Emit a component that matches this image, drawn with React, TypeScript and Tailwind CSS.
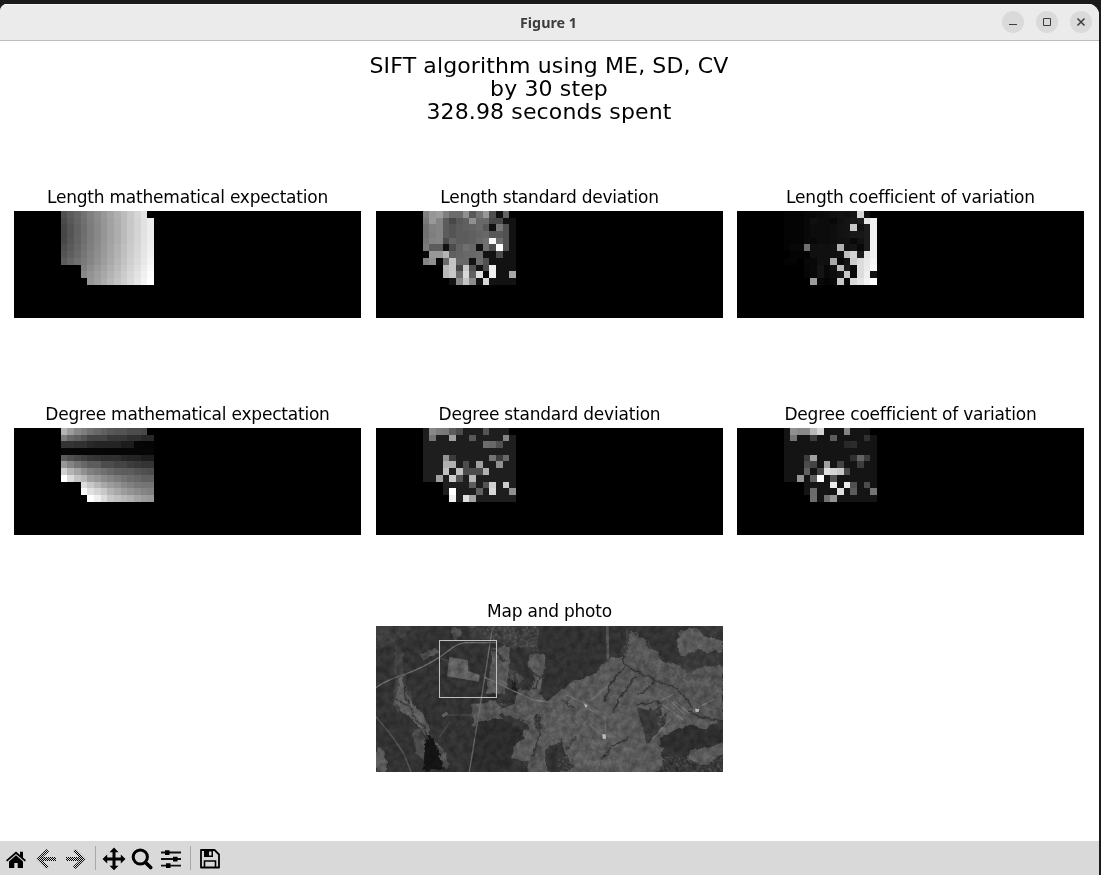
import React from "react";

const COLS = 52;
const ROWS = 16;
const FIRST_COL = 7;

const lengthMean = `
50 5c 66 72 80 8b 98 a4 b0 bc c9 d6 e4 00
4a 58 64 70 7e 8a 96 a2 ae bb c8 d4 e2 ec
46 54 62 6e 7c 88 95 a1 ad bb c8 d4 e2 ec
46 54 62 6e 7c 88 95 a1 ad bb c8 d4 e2 ec
48 56 63 70 7d 89 96 a2 ae bb c9 d5 e3 ed
4e 5a 66 73 7f 8b 98 a4 b1 be cb d7 e4 ee
54 5e 69 76 82 8e 9a a6 b2 c0 cd d9 e6 f0
5c 66 6f 7a 85 91 9d a9 b6 c3 cf db e8 f4
00 00 00 7f 8c 98 a2 ae ba c7 d3 df ec f8
00 00 00 88 93 9d a7 b3 bf cb d7 e3 f0 fc
00 00 00 00 96 a0 ab b7 c3 ce da e6 f4 ff`;

const lengthDeviation = `
80 96 9c 80 6c 6c 90 58 74 98 50 12 64 00
78 98 84 5c 48 58 60 90 68 68 48 48 12 12
70 80 84 5c 54 5c 60 62 68 58 10 78 50 12
70 7e 84 5c 54 5c 5c 60 64 68 58 58 50 12
74 82 84 4c 64 5c 5c 60 68 70 f8 6c 50 12
7a 5c 5c 12 4c 62 70 68 12 70 4c ff 50 12
08 98 98 b4 60 64 68 68 6c 12 12 4c 12 12
84 90 08 6a c4 68 68 12 6c 50 12 12 12 12
00 00 00 b8 c4 44 c8 50 12 4c f0 12 12 12
00 00 00 b8 c8 6c d8 60 e0 08 f0 12 12 a8
00 00 00 00 12 88 c4 8c 12 d8 12 12 12 12`;

const lengthVariation = `
04 04 04 08 08 0a 0c 10 12 10 14 d8 12 00
04 04 04 08 10 0c 0c 08 10 14 18 1c e4 f0
04 04 04 08 0c 0c 0c 0e 12 14 c8 10 1c f0
04 04 04 08 0c 0c 0c 0e 12 14 18 18 1c f0
04 04 04 0a 08 0c 0c 0e 10 12 08 12 1c f0
04 08 08 70 10 10 10 12 b0 12 14 08 1c f0
00 04 04 04 10 10 10 10 10 c0 d4 1c e4 f0
04 04 00 08 08 10 10 a8 08 14 cc dc e8 f4
00 00 00 06 08 14 08 10 bc 18 08 dc ea f8
00 00 00 06 08 14 08 0c 14 c8 08 dc ee 12
00 00 00 00 9c 08 04 08 c8 08 d8 e4 f4 ff`;

const degreeMean = `
b4 9c 88 7c 70 68 60 58 54 54 4c 4c 48 00
7c 68 60 54 44 44 44 38 38 38 30 30 28 28
34 34 30 30 28 24 24 24 24 1c 1c 06 05 05
06 06 06 06 06 06 06 06 06 06 06 06 06 06
5c 50 48 40 38 34 30 30 30 28 24 24 1c 1c
98 84 74 68 5c 5c 4c 4c 44 44 3c 38 34 34
d0 b4 a4 90 80 78 70 68 60 5c 5c 54 50 4c
ff dc c4 b8 a0 98 8c 84 7c 74 6c 68 60 60
00 00 00 dc c8 b8 a8 9c 94 88 80 78 74 74
00 00 00 f8 e0 d4 c8 b4 a8 9c 94 8c 84 80
00 00 00 00 ff f0 dc c8 c0 b8 b0 a4 9c 98`;

const degreeDeviation = `
1e 88 7c 78 5c 4c 1e 1e 1e 54 1e 1e 1e 00
1e 74 1e 1e a0 1e 1e 58 1e 1e 1e 1e 84 1e
1e 1e 1e 1e 1e 1e 1e 1e 1e 6c 68 50 1e 1e
1e 1e 1e 1e 1e 1e 1e 1e 1e 1e 1e 1e 1e 1e
1e 1e 1e 94 3c 1e 1e 1e 1e 1e 74 3c 68 1e
1e 1e 1e b0 b0 1e 4c 1e a0 1e 1e 90 1e 1e
1e 1e 1e c0 1e c0 4c 4c 4c b0 1e 1e 1e 1e
1e 1e a0 1e cc 54 1e b8 1e 1e 1e 1e 1e 1e
00 00 00 1e 1e 1e 1e 5c 1e 54 d0 1e cc 1e
00 00 00 1e ff 1e 1e 1e 60 1e d8 1e 1e 90
00 00 00 00 f0 1e e0 a4 1e 1e 1e 1e 1e 1e`;

const degreeVariation = `
14 90 88 88 b8 d4 14 14 14 84 14 14 14 00
14 74 14 14 3c 14 14 5c 14 14 14 14 30 14
14 14 14 14 14 14 14 14 14 28 2c 14 14 14
14 14 14 14 14 14 14 14 14 14 14 14 14 14
14 14 14 3c a0 14 14 14 14 14 30 64 3c 14
14 14 14 4c 44 14 a0 14 44 14 14 3c 14 14
14 14 14 60 14 44 e0 d4 c8 48 14 14 14 14
14 14 94 14 60 ff 14 50 14 14 14 14 14 14
00 00 00 14 14 14 14 ec 14 ec 50 14 4c 14
00 00 00 14 6c 14 14 14 e0 14 5c 14 14 74
00 00 00 00 6c 14 70 94 14 14 14 14 14 14`;

function Heatmap({ data }: { data: string }) {
  const rows = data.trim().split("\n").map((line) => line.split(" "));
  return (
    <svg
      className="block h-[107px] w-[347px] bg-black"
      viewBox={`0 0 ${COLS} ${ROWS}`}
      preserveAspectRatio="none"
      shapeRendering="crispEdges"
    >
      {rows.map((row, y) =>
        row.map((v, x) =>
          v === "00" ? null : (
            <rect key={`${x}-${y}`} x={FIRST_COL + x} y={y} width="1" height="1" fill={`#${v}${v}${v}`} />
          ),
        ),
      )}
    </svg>
  );
}

function Plot({ title, data }: { title: string; data: string }) {
  return (
    <figure className="w-[347px]">
      <figcaption className="h-6 whitespace-nowrap text-center text-[17px] leading-5 tracking-[-0.21px]">
        {title}
      </figcaption>
      <Heatmap data={data} />
    </figure>
  );
}

function TerrainMap() {
  return (
    <svg className="block h-[146px] w-[347px] bg-[#303030]" viewBox="18 18 1041 438" preserveAspectRatio="none">
      <defs>
        <filter id="rough" x="0" y="0" width="100%" height="100%" colorInterpolationFilters="sRGB">
          <feTurbulence type="fractalNoise" baseFrequency="0.045" numOctaves="4" seed="4" result="n" />
          <feDisplacementMap in="SourceGraphic" in2="n" scale="18" xChannelSelector="R" yChannelSelector="G" />
          <feGaussianBlur stdDeviation="0.8" />
        </filter>
        <filter id="grain" x="0" y="0" width="100%" height="100%" colorInterpolationFilters="sRGB">
          <feTurbulence type="fractalNoise" baseFrequency="0.05" numOctaves="5" seed="9" />
          <feColorMatrix values="1.8 0 0 0 -0.3  1.8 0 0 0 -0.3  1.8 0 0 0 -0.3  0 0 0 0 1" />
        </filter>
        <filter id="speckle" x="0" y="0" width="100%" height="100%" colorInterpolationFilters="sRGB">
          <feTurbulence type="fractalNoise" baseFrequency="0.12" numOctaves="3" seed="21" result="s" />
          <feColorMatrix in="s" values="0 0 0 0 .42  0 0 0 0 .42  0 0 0 0 .42  4 0 0 0 -1.8" result="dots" />
          <feComposite in="dots" in2="SourceGraphic" operator="in" />
        </filter>
      </defs>
      <rect x="0" y="0" width="1080" height="480" fill="#303030" />
      <g filter="url(#rough)">
        <rect x="0" y="0" width="1080" height="480" fill="none" />
        {/* brighter ground in the north-west and the suburb strip */}
        <path d="M18 18H135L90 55 18 95z" fill="#3b3b3b" />
        <path d="M243 25h25l4 25-22 10z" fill="#4e4e4e" />
        <path d="M290 18H505V95L430 85 385 62 300 55z" fill="#383838" />
        <path d="M150 105l45-25 10 18-45 22z" fill="#4d4d4d" />
        <path d="M75 80h22l8 90 20 75-45 30-12-20z" fill="#3e3e3e" />
        {/* river valley */}
        <path d="M82 175l22-5 6 55 22 30 20 15 18 35 12 40-14 6-25-35-35-35-35-30 5-25 12-20z" fill="#585858" />
        <path d="M130 335l30-12 5 70-5 25-25-15z" fill="#494949" />
        <path d="M190 360l20 15 22 35-2 35-15-8z" fill="#4c4c4c" />
        <path d="M18 380l25 15 8 30-4 30H18z" fill="#595959" />
        {/* fields */}
        <path d="M368 83l52-2-6 90-10 52-54-2z" fill="#545454" />
        <path d="M474 98l56 8-22 122-25-12 12-55-22-20z" fill="#545454" />
        <path d="M415 145l30 10 15 25-20 15-20-20z" fill="#474747" />
        {/* central town */}
        <path d="M306 255l70-15 12 28 45-15 10-50 65 20 40 35 55-70 60-10 40-50 60-20 20-60 80 50 30 50 60 20 60 20 30 50v70l-40 20-45-10-50-5-20 50-25 60-5 40H520l-35 20-15-60-40-8 5-60-55-15-70-22z" fill="#515151" />
        <path d="M535 240l75-55 60-20 50-48 50-10 80 30 50 60 90 60 20 50-60 20-70 60-10 70H560l-30-50z" fill="#555" />
        <path d="M928 32l55-10 22 30 54 5v38l-70 5-50 22-15-45z" fill="#565656" />
        <path d="M780 30l50 35 20 60 90 10 60-25 59 30v160l-90-10-100-80-110-50z" fill="#505050" />
        <path d="M960 378l60 5 39-20v40l-45 30-60-10z" fill="#555" />
        <path d="M430 335l50 5 20 50-30 35-40-30z" fill="#555" />
        {/* woods and clearings over the town */}
        <path d="M525 50l235-30v80l-55 20-50 50-40 10-60 30-30-5z" fill="#2f2f2f" />
        <path d="M970 18h89v30l-60-5z" fill="#363636" />
        <path d="M920 115l65-25 74 10v35l-60 5-50 20z" fill="#363636" />
        <path d="M870 350l80-35 109 20v30l-60 20-80 10-50-15z" fill="#2c2c2c" />
        <path d="M800 265l35 5 40-15 5 20-25 25 40-25-15 40-50 60-10-45z" fill="#353535" />
        <path d="M375 295l70 10 20 50-35 25-5 70-125 2 20-145z" fill="#2a2a2a" />
        <path d="M525 390l50-35 15 55 20 35-60 15-25-20z" fill="#303030" />
        <path d="M385 280l30 5 50 20 15 28-30-5-50-30z" fill="#323232" />
        <path d="M495 280l18 5-5 55-12-25z" fill="#323232" />
        <path d="M425 175l14 15 5 25-12 15-6-20z" fill="#202020" />
        <path d="M170 335l20 18 18 45 14 50-62 5 6-85z" fill="#131313" />
        <g fill="none" stroke="#343434" strokeWidth="5">
          <path d="M82 240l40 20 12 35 25 20 15 45M102 175l3 50 12 30M150 330l18 25" />
          <path d="M745 18l20 115 30 20 60 25 60 25 40 40 15 35M765 140l-45 55-15 50M800 170l-40 45-30 60M855 185l-50 45M800 255l70-10" />
          <path d="M438 155l2 70M370 90l40 35M480 150l45 25M488 210l35-55M490 410l25-100M690 430l35-50 50-30M950 270l50 25 50 8" />
          <path d="M575 235l35 30M620 350l-30 40" />
        </g>
      </g>
      <g filter="url(#speckle)" opacity=".38">
        <path d="M290 18h215v75L380 70zM310 255l65-12 60 10 65-20 40 50-15 150-30-110-130-60zM525 240l95 20 85 70-15 90-165-60zM775 40l60 20 15 35 80 50 100 30 29 60-80-20-170-80-60-30zM830 215l120 30 50 25-65 30-60 50zM560 420l130-60 90 20-10 75H560zM870 410h189v46H860zM80 180l22 60 70 60 12 40-60-50-40-40zM190 355l35 40 5 40-30-40z" fill="#fff" />
      </g>
      <g fill="none" strokeLinecap="round" strokeLinejoin="round">
        <path d="M18 203C55 175 90 170 125 155S190 125 218 105 255 72 285 68h95" stroke="#646464" strokeWidth="4" />
        <path d="M18 290c30 35 60 70 85 115l20 50" stroke="#505050" strokeWidth="4" />
        <path d="M367 25l-24 155-45 275" stroke="#5e5e5e" strokeWidth="4" />
        <path d="M345 173l90 42 55 25 45 6" stroke="#6c6c6c" strokeWidth="4" />
        <path d="M350 177l90 42" stroke="#444" strokeWidth="2" />
        <path d="M210 115l24 8M210 350l30-45M225 285h75" stroke="#4b4b4b" strokeWidth="3" />
        <path d="M712 18l2 100" stroke="#4e4e4e" strokeWidth="8" />
        <path d="M772 25l-6 110" stroke="#4b4b4b" strokeWidth="2" />
        <path d="M640 245l65 45 2 50M648 253l65-55M590 225l58 28M655 265l50 30" stroke="#6a6a6a" strokeWidth="3" />
        <path d="M848 358l53-60M985 262l47-24M870 243l40-20M880 255l60 45M905 245l40 40M915 245l40 32" stroke="#747474" strokeWidth="3" />
        <path d="M830 190l80 40M890 180l40-45M870 330l70-28M960 240l45 25 50 10" stroke="#646464" strokeWidth="2" />
      </g>
      <path d="M238 111l56 10 1 32 34 12-2 20-96-16z" fill="#5c5c5c" />
      <path d="M697 342l12 2-2 14-9-2zM976 266l12 1-2 9-9-1zM642 253l10 2-4 10z" fill="#b5b5b5" />
      <path d="M214 285l16-10 5 8-15 10zM708 330l32 2-5 22-28-4z" fill="#606060" />
      <rect x="0" y="0" width="1080" height="480" filter="url(#grain)" className="mix-blend-overlay" opacity=".18" />
      <rect x="208.5" y="61.5" width="171" height="171" fill="none" stroke="#c0c0c0" strokeWidth="3" />
    </svg>
  );
}

function Toolbar() {
  return (
    <footer className="flex h-[34px] shrink-0 items-center bg-[#d9d9d9] text-black">
      <svg className="h-[34px] w-[240px]" viewBox="0 0 240 34">
        <defs>
          <pattern id="checker" width="2" height="2" patternUnits="userSpaceOnUse">
            <path d="M0 0h1v1H0zM1 1h1v1H1z" fill="#000" shapeRendering="crispEdges" />
          </pattern>
        </defs>
        <path d="M6 19.2L16 10.5l4 3.5v-3.2h3v5.8l3 2.6-1.2 1.4-8.8-7.7-8.8 7.7z" />
        <path d="M9 20.4l7-6.1 7 6.1V27h-5.3v-5h-3.4v5H9z" />
        <path d="M46.500 8l2.500 2.400-6 5.600H56v4H43l6 5.600-2.500 2.400L36.500 18z" fill="url(#checker)" />
        <path d="M75.500 8L73 10.400l6 5.600H66v4h13l-6 5.600 2.500 2.400 10-10z" fill="url(#checker)" />
        <path d="M95.500 5v24M190.500 5v24" stroke="#a8a8a8" />
        <path d="M114 6.500l4.500 4.700h-3v5.300h5.300v-3l4.700 4.500-4.700 4.500v-3h-5.300v5.300h3L114 29.300l-4.500-4.500h3v-5.300h-5.300v3L102.500 18l4.700-4.500v3h5.300v-5.300h-3z" />
        <circle cx="140.300" cy="16" r="7.100" fill="none" stroke="#000" strokeWidth="3" />
        <path d="M145.500 21.500l5.200 5" stroke="#000" strokeWidth="3.700" strokeLinecap="round" />
        <path d="M161 11.500h20M161 18h20M161 24.700h20" stroke="#111" strokeWidth="1.800" />
        <path d="M165 9.200h4.500V14H165zM173 15.700h4.500v4.800H173zM166 22.200h4.500V27H166z" />
        <path d="M201 9h13.500l4.500 4.500V26.500h-18z" fill="none" stroke="#000" strokeWidth="1.800" strokeLinejoin="round" />
        <path d="M204 9h9v7h-9z" />
        <path d="M209 10.500h2.500v4H209z" fill="#d9d9d9" />
        <path d="M204.500 26v-6h11v6" fill="none" stroke="#000" strokeWidth="1.600" />
      </svg>
    </footer>
  );
}

function WindowButton({ children }: { children: React.ReactNode }) {
  return (
    <span className="flex size-[22px] items-center justify-center rounded-full bg-[#dadada]">
      <svg className="size-[22px]" viewBox="0 0 22 22" fill="none" stroke="#3c3c3c">
        {children}
      </svg>
    </span>
  );
}

export default function App() {
  return (
    <div className="h-[875px] w-[1101px] overflow-hidden bg-[#1b1a1b] pr-0.5 pt-1">
      <main className="flex h-[871px] flex-col overflow-hidden rounded-tl-[7px] rounded-tr-[11px] bg-white font-['DejaVu_Sans',sans-serif] text-black">
        <header className="grid h-[37px] shrink-0 grid-cols-[1fr_auto_1fr] items-center border-b border-[#bcbcbc] bg-[#ebebeb] pr-[7px] shadow-[inset_0_1px_0_#f8f8f8]">
          <span />
          <h1 className="pl-[5px] pt-0.5 font-['Noto_Sans',sans-serif] text-[14.3px] font-bold leading-5 text-[#3d3d3d]">
            Figure 1
          </h1>
          <div className="flex justify-end gap-3">
            <WindowButton>
              <path d="M7 13.500h8" />
            </WindowButton>
            <WindowButton>
              <path d="M7.500 7.500h7v7h-7z" />
            </WindowButton>
            <WindowButton>
              <path d="M7.500 7.500l7 7M14.500 7.500l-7 7" strokeWidth="1.500" />
            </WindowButton>
          </div>
        </header>
        <section className="flex flex-1 flex-col pt-[13px]">
          <h2 className="h-[133px] pr-px text-center text-[22px] leading-[23px] tracking-[0.13px]">
            SIFT algorithm using ME, SD, CV
            <br />
            by 30 step
            <br />
            328.98 seconds spent
          </h2>
          <div className="grid grid-cols-[362px_361px_347px] gap-y-[86px] pl-3.5">
            <Plot title="Length mathematical expectation" data={lengthMean} />
            <Plot title="Length standard deviation" data={lengthDeviation} />
            <Plot title="Length coefficient of variation" data={lengthVariation} />
            <Plot title="Degree mathematical expectation" data={degreeMean} />
            <Plot title="Degree standard deviation" data={degreeDeviation} />
            <Plot title="Degree coefficient of variation" data={degreeVariation} />
          </div>
          <figure className="ml-[376px] mt-[66px] w-[347px]">
            <figcaption className="h-[25px] text-center text-[17px] leading-5 tracking-[-0.22px]">
              Map and photo
            </figcaption>
            <TerrainMap />
          </figure>
        </section>
        <Toolbar />
      </main>
    </div>
  );
}
